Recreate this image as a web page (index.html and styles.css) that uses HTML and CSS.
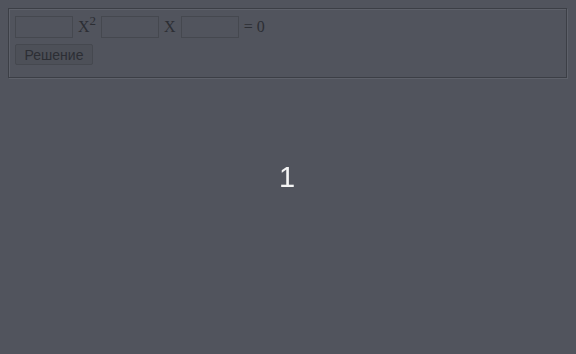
FILE: index.html
```html
<!DOCTYPE html>
<html lang="ru">
<head>
<meta charset="utf-8">
<title>Квадратное уравнение</title>
<link rel="stylesheet" href="styles.css">
</head>
<body>
<fieldset class="box">
  <div class="eq">
    <input class="coef" type="text">
    <span class="var">X<sup>2</sup></span>
    <input class="coef" type="text">
    <span class="var">X</span>
    <input class="coef" type="text">
    <span class="var">= 0</span>
  </div>
  <div class="actions">
    <button class="solve" type="button">Решение</button>
  </div>
</fieldset>
<div class="overlay"><span class="count">1</span></div>
</body>
</html>
```

FILE: styles.css
```css
html, body {
  margin: 0;
  padding: 0;
  height: 100%;
}
body {
  background: #51545d;
  padding: 8px;
  box-sizing: border-box;
  font-family: "Liberation Serif", "Times New Roman", serif;
  font-size: 16px;
  color: #2c2e34;
}
.box {
  margin: 0 1px 0 0;
  padding: 7px 6px 12px 6px;
  border: 1px solid #3c3f46;
  box-shadow: inset 1px 1px 0 #5e616a, 1px 1px 0 #5e616a;
  min-width: 0;
}
.eq {
  display: flex;
  align-items: center;
  height: 22px;
}
.coef {
  width: 58px;
  height: 22px;
  box-sizing: border-box;
  margin: 0;
  border: 1px solid #45484f;
  background: #51545d;
  padding: 1px 2px;
}
.var {
  margin: 0 5px;
  line-height: 22px;
}
.var sup {
  font-size: 13px;
  line-height: 0;
  position: relative;
  top: -1px;
}
.actions {
  margin-top: 6px;
  display: flex;
}
.solve {
  width: 78px;
  height: 21px;
  margin: 0;
  padding: 0;
  font-family: "Liberation Sans", Arial, sans-serif;
  font-size: 14px;
  color: #2c2e34;
  background: #4d5058;
  border: 1px solid #45484f;
  border-radius: 2px;
}
.overlay {
  position: fixed;
  inset: 0;
  display: flex;
  align-items: center;
  justify-content: center;
  pointer-events: none;
}
.count {
  font-family: "Liberation Sans", Arial, sans-serif;
  font-size: 29px;
  color: #f4f4f4;
  margin-left: -2px;
}
```
